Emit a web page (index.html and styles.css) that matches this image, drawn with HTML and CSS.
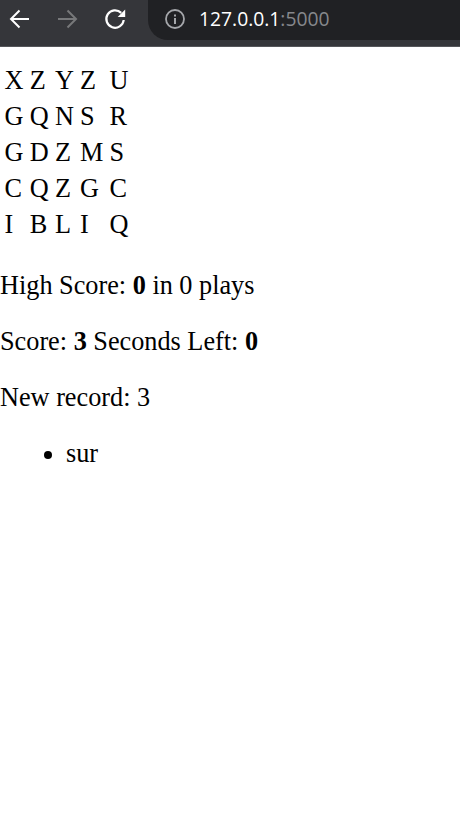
FILE: index.html
```html
<!DOCTYPE html>
<html lang="en">
<head>
<meta charset="utf-8">
<title>Boggle</title>
<link rel="stylesheet" href="styles.css">
</head>
<body>
<header class="chrome">
  <svg class="nav-icon back" viewBox="0 0 24 24" width="24" height="24"><path d="M21 12H3.5M11.5 3.5 3 12l8.5 8.5" fill="none" stroke="#fff" stroke-width="2"/></svg>
  <svg class="nav-icon forward" viewBox="0 0 24 24" width="24" height="24"><path d="M2 12h17.5M11.5 3.5 20 12l-8.5 8.5" fill="none" stroke="#77787a" stroke-width="2"/></svg>
  <svg class="nav-icon reload" viewBox="0 0 24 24" width="24" height="24"><path d="M19.7 13A8.7 8.7 0 1 1 17.2 5.9" fill="none" stroke="#fff" stroke-width="2.2"/><path d="M21.2 2.5V10h-7.5z" fill="#fff"/></svg>
  <div class="omnibox">
    <svg class="info" viewBox="0 0 20 20" width="20" height="20"><circle cx="10" cy="10" r="9" fill="none" stroke="#a5a7ab" stroke-width="1.8"/><rect x="9" y="9" width="2" height="6" fill="#a5a7ab"/><rect x="9" y="5.5" width="2" height="2" fill="#a5a7ab"/></svg>
    <span class="url"><span class="host">127.0.0.1</span><span class="port">:5000</span></span>
  </div>
</header>
<main class="page">
  <table class="board">
    <tr><td>X</td><td>Z</td><td>Y</td><td>Z</td><td>U</td></tr>
    <tr><td>G</td><td>Q</td><td>N</td><td>S</td><td>R</td></tr>
    <tr><td>G</td><td>D</td><td>Z</td><td>M</td><td>S</td></tr>
    <tr><td>C</td><td>Q</td><td>Z</td><td>G</td><td>C</td></tr>
    <tr><td>I</td><td>B</td><td>L</td><td>I</td><td>Q</td></tr>
  </table>
  <p class="line">High Score: <b>0</b> in 0 plays</p>
  <p class="line">Score: <b>3</b> Seconds Left: <b>0</b></p>
  <p class="line">New record: 3</p>
  <ul class="words"><li>sur</li></ul>
</main>
</body>
</html>
```
FILE: styles.css
```css
html, body { margin: 0; padding: 0; background: #fff; }
body { font-family: "Liberation Serif", "Times New Roman", serif; font-size: 26.25px; color: #000; overflow: hidden; }
.chrome { height: 47px; box-sizing: border-box; background: #35363a; border-bottom: 1px solid #55565a; display: flex; align-items: flex-start; padding-left: 8px; position: relative; }
.nav-icon { margin-top: 7px; flex: none; }
.back { margin-right: 24px; }
.forward { margin-right: 24px; }
.reload { margin-right: 20px; }
.omnibox { flex: 1; height: 40px; background: #202124; border-radius: 0 0 0 20px; display: flex; align-items: center; padding-left: 17px; }
.info { margin-top: -2px; }
.url { font-family: "Open Sans", sans-serif; font-size: 19.3px; margin-left: 14px; margin-top: -3px; }
.host { color: #fff; }
.port { color: #86888c; }
.page { padding-top: 16px; }
.board { border-spacing: 3px 0; border-collapse: separate; margin-bottom: 28px; }
.board td { padding: 0 1.6px; height: 36px; }
.line { margin: 26px 0; line-height: 30px; }
.words { margin: 26px 0; padding-left: 66px; line-height: 30px; }
```
